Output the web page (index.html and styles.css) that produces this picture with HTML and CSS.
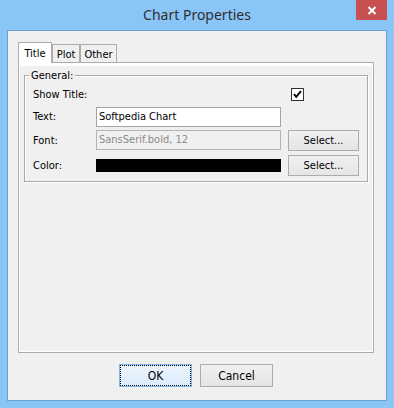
FILE: index.html
```html
<!DOCTYPE html>
<html lang="en">
<head>
    <meta charset="UTF-8">
    <title>Chart Properties</title>
    <link rel="stylesheet" href="styles.css">
</head>
<body>
    <div class="window">
        <div class="titlebar">
            <span class="window-title">Chart Properties</span>
            <button class="close-btn" aria-label="Close">
                <svg width="10" height="9" viewBox="0 0 10 9">
                    <path d="M1.5 1 L8.5 8 M8.5 1 L1.5 8" stroke="#fff" stroke-width="2" fill="none"/>
                </svg>
            </button>
        </div>

        <div class="client">
            <div class="tabs">
                <div class="tab active" style="width: 34px">Title</div>
                <div class="tab" style="width: 28px">Plot</div>
                <div class="tab" style="width: 37px">Other</div>
            </div>

            <div class="tab-panel">
                <div class="group">
                    <span class="group-title">General:</span>
                    <div class="form-grid">
                        <span class="form-label row-1">Show Title:</span>
                        <span class="checkbox row-1">
                            <svg width="13" height="13" viewBox="0 0 13 13">
                                <rect x="0.5" y="0.5" width="12" height="12" fill="#fff" stroke="#333"/>
                                <path d="M3 6.2 L5.2 8.8 L10 3.2" stroke="#000" stroke-width="1.9" fill="none"/>
                            </svg>
                        </span>

                        <span class="form-label row-2">Text:</span>
                        <span class="text-field row-2">Softpedia Chart</span>

                        <span class="form-label row-3">Font:</span>
                        <span class="text-field disabled row-3">SansSerif.bold, 12</span>
                        <button class="btn select-btn row-3">Select...</button>

                        <span class="form-label row-4">Color:</span>
                        <span class="color-swatch row-4" style="background: #000000"></span>
                        <button class="btn select-btn row-4">Select...</button>
                    </div>
                </div>
            </div>

            <div class="dialog-buttons">
                <button class="btn dialog-btn default">OK</button>
                <button class="btn dialog-btn">Cancel</button>
            </div>
        </div>
    </div>
</body>
</html>
```

FILE: styles.css
```css
* {
    margin: 0;
    padding: 0;
    box-sizing: border-box;
}

body {
    font-family: 'DejaVu Sans Condensed', 'Liberation Sans', Arial, sans-serif;
    font-size: 11px;
    color: #000;
    background: #8ac5f8;
}

.window {
    width: 394px;
    height: 408px;
    background: #8ac5f8;
    padding: 0 7px 7px;
    display: flex;
    flex-direction: column;
}

/* title bar */
.titlebar {
    height: 30px;
    display: grid;
    grid-template-columns: 1fr auto 1fr;
}

.window-title {
    grid-column: 2;
    font-family: 'Noto Sans', 'Open Sans', sans-serif;
    font-size: 14px;
    line-height: 29px;
    color: #2e2e2e;
}

.close-btn {
    grid-column: 3;
    justify-self: end;
    align-self: start;
    width: 31px;
    height: 20px;
    border: none;
    background: #c75050;
    display: flex;
    align-items: center;
    justify-content: center;
}

/* dialog body */
.client {
    flex: 1;
    background: #f0f0f0;
    border: 1px solid #6d9fd0;
    padding: 11px 12px 0 10px;
    display: flex;
    flex-direction: column;
}

.tabs {
    display: flex;
    align-items: flex-end;
    height: 20px;
    position: relative;
    z-index: 1;
}

.tab {
    height: 18px;
    border: 1px solid #acacac;
    border-bottom: none;
    background: #f0f0f0;
    text-align: center;
    line-height: 13px;
    padding-top: 3px;
}

.tab.active {
    height: 21px;
    margin-bottom: -1px;
    background: #fff;
    padding-top: 4px;
}

.tab-panel {
    flex: 1;
    border: 1px solid #acacac;
    box-shadow: inset 1px 3px 0 #fff, inset -1px -1px 0 #fff;
    padding-top: 12px;
}

.group {
    position: relative;
    margin: 0 5px;
    border: 1px solid #a9a9a9;
    box-shadow: 1px 1px 0 #fff, inset 1px 1px 0 #fff;
    padding: 8px 0 3px 8px;
}

.group-title {
    position: absolute;
    top: -7px;
    left: 4px;
    padding: 0 2px;
    line-height: 13px;
    background: #f0f0f0;
}

.form-grid {
    display: grid;
    grid-template-columns: 63px 185px 78px;
    grid-template-rows: 21px 23px 24px 26px;
    align-items: center;
}

.row-1 { grid-row: 1; }
.row-2 { grid-row: 2; }
.row-3 { grid-row: 3; }
.row-4 { grid-row: 4; }

.form-label {
    grid-column: 1;
}

.checkbox {
    grid-column: 3;
    width: 13px;
    height: 13px;
    margin-left: 10px;
    display: flex;
}

.text-field {
    grid-column: 2;
    height: 20px;
    border: 1px solid #a5a5a5;
    background: #fff;
    padding: 0 2px;
    line-height: 18px;
    white-space: nowrap;
}

.text-field.disabled {
    background: #f0f0f0;
    border-color: #b4b4b4;
    color: #8a8a8a;
}

.color-swatch {
    grid-column: 2;
    height: 13px;
}

.btn {
    font: inherit;
    color: #000;
    border: 1px solid #acacac;
    background: linear-gradient(#f0f0f0, #e5e5e5);
    text-align: center;
}

.select-btn {
    grid-column: 3;
    justify-self: end;
    width: 71px;
    height: 21px;
}

.dialog-buttons {
    display: flex;
    justify-content: center;
    gap: 8px;
    margin: 11px 0 13px;
}

.dialog-btn {
    width: 73px;
    height: 23px;
    font-size: 12px;
}

.dialog-btn.default {
    border-color: #7eb4ea;
    background: linear-gradient(#ecf4fc, #dcecfc);
    outline: 1px dotted #000;
    outline-offset: -2px;
}
```
